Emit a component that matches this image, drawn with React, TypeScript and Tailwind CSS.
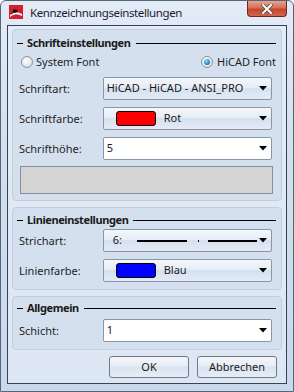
import React from "react";

const font = { fontFamily: '"Noto Sans", "Open Sans", sans-serif' };

function Arrow() {
  return (
    <svg width="8" height="5" viewBox="0 0 8 5" className="shrink-0">
      <path d="M0 0 H8 L4 4.5 Z" fill="#000" />
    </svg>
  );
}

function GroupTitle({ text }: { text: string }) {
  return (
    <div className="flex items-center h-[16px] pl-[4px] pr-[5px]">
      <div className="w-[6px] h-[1px] bg-black" />
      <span className="ml-[4px] mr-[5px] font-bold text-[11px] tracking-[-0.4px] leading-[16px] text-[#1a1a1a]">{text}</span>
      <div className="flex-1 h-[1px] bg-black" />
    </div>
  );
}

function Row({ label, children, className = "" }: { label: string; children: React.ReactNode; className?: string }) {
  return (
    <div className={"flex items-center h-[23px] pl-[6px] pr-[9px] " + className}>
      <div className="w-[84px] text-[11px] text-[#1e1e1e] leading-[14px]">{label}</div>
      {children}
    </div>
  );
}

function Combo({ children, editable = false }: { children: React.ReactNode; editable?: boolean }) {
  return (
    <div
      className={
        "w-[170px] h-[23px] rounded-[2px] border flex items-center pr-[4px] " +
        (editable
          ? "bg-white border-[#8896a8]"
          : "border-[#8896a8] bg-[linear-gradient(to_bottom,#f4f7fb_0%,#e6edf6_45%,#d6e1ef_50%,#e3eaf5_100%)]")
      }
    >
      <div className="flex-1 flex items-center min-w-0">{children}</div>
      <Arrow />
    </div>
  );
}

function Swatch({ color, label }: { color: string; label: string }) {
  return (
    <div className="flex items-center pl-[12px]">
      <div className="w-[40px] h-[15px] rounded-[3px] border border-black" style={{ background: color }} />
      <span className="ml-[8px] text-[11px] text-[#1a1a1a]">{label}</span>
    </div>
  );
}

function Radio({ checked }: { checked: boolean }) {
  return (
    <div className="w-[12px] h-[12px] rounded-full border border-[#8a939e] bg-[radial-gradient(circle_at_40%_35%,#ffffff,#dfe3e8_70%,#c9ced5)] flex items-center justify-center">
      {checked && (
        <div className="w-[6px] h-[6px] rounded-full bg-[radial-gradient(circle_at_40%_35%,#9fdcff,#1e86c8_60%,#0b4f86)]" />
      )}
    </div>
  );
}

function Group({ children, className = "" }: { children: React.ReactNode; className?: string }) {
  return (
    <div className={"rounded-[4px] border border-[#c2cedd] bg-[#d5e0ee] flex flex-col " + className}>{children}</div>
  );
}

export default function App() {
  return (
    <div
      style={font}
      className="w-[294px] h-[392px] border border-[#55657a] rounded-t-[6px] bg-[linear-gradient(to_bottom,#e3ebf6_0%,#d3dfee_40%,#cad8ea_100%)] flex flex-col"
    >
      {/* title bar */}
      <div className="h-[24px] flex items-start">
        <svg width="14" height="14" viewBox="0 0 14 14" className="ml-[8px] mt-[4px] shrink-0">
          <rect x="0" y="0" width="14" height="14" fill="#d4202c" />
          <path d="M1 10 Q6 5 13 9 L13 11 Q6 7 1 12 Z" fill="#ffffff" />
          <ellipse cx="6" cy="6" rx="2.4" ry="1.8" fill="#111" />
          <path d="M2 9 Q5 6 9 6" stroke="#111" strokeWidth="1" fill="none" />
        </svg>
        <span className="ml-[7px] mt-[4px] text-[11.5px] tracking-[-0.4px] leading-[16px] text-[#1d1a33]">Kennzeichnungseinstellungen</span>
        <div className="flex-1" />
        <div className="mr-[6px] w-[40px] h-[16px] rounded-b-[4px] border border-t-0 border-[#6b2a20] bg-[linear-gradient(to_bottom,#e8a393_0%,#d4705a_45%,#c3462d_55%,#d1664b_100%)] flex items-center justify-center">
          <svg width="12" height="10" viewBox="0 0 12 10">
            <path d="M2 1 L10 9 M10 1 L2 9" stroke="#4a4a4a" strokeWidth="3.4" strokeLinecap="square" />
            <path d="M2 1 L10 9 M10 1 L2 9" stroke="#ffffff" strokeWidth="2" strokeLinecap="square" />
          </svg>
        </div>
      </div>

      {/* client area */}
      <div className="mx-[6px] h-[359px] border border-[#33445a] bg-[linear-gradient(to_bottom,#e3ebf6,#dde6f3)] px-[4px] pt-[3px] flex flex-col">
        <Group className="h-[172px] pt-[5px]">
          <GroupTitle text="Schrifteinstellungen" />
          <div className="mt-[3px] h-[16px] flex items-center pl-[8px]">
            <div className="w-[180px] flex items-center">
              <Radio checked={false} />
              <span className="ml-[3px] text-[11px] text-[#1e1e1e]">System Font</span>
            </div>
            <Radio checked={true} />
            <span className="ml-[4px] text-[11px] text-[#1e1e1e]">HiCAD Font</span>
          </div>
          <Row label="Schriftart:" className="mt-[7px]">
            <Combo>
              <span className="pl-[3px] text-[11px] text-[#1a1a1a] whitespace-nowrap">HiCAD - HiCAD - ANSI_PRO</span>
            </Combo>
          </Row>
          <Row label="Schriftfarbe:" className="mt-[7px]">
            <Combo>
              <Swatch color="#ff0000" label="Rot" />
            </Combo>
          </Row>
          <Row label="Schrifthöhe:" className="mt-[7px]">
            <Combo editable>
              <span className="pl-[3px] text-[11px] text-[#1a1a1a]">5</span>
            </Combo>
          </Row>
          <div className="mt-[6px] ml-[7px] mr-[8px] h-[28px] border border-[#8a8f96] bg-[#d4d4d4]" />
        </Group>

        <Group className="mt-[6px] h-[83px] pt-[4px]">
          <GroupTitle text="Linieneinstellungen" />
          <Row label="Strichart:" className="mt-[1px]">
            <Combo>
              <span className="pl-[9px] text-[11px] text-[#1a1a1a]">6:</span>
              <div className="ml-[15px] w-[50px] h-[2px] bg-black" />
              <div className="ml-[11px] w-[1px] h-[2px] bg-black" />
              <div className="ml-[9px] w-[49px] h-[2px] bg-black" />
            </Combo>
          </Row>
          <Row label="Linienfarbe:" className="mt-[7px]">
            <Combo>
              <Swatch color="#0000ff" label="Blau" />
            </Combo>
          </Row>
        </Group>

        <Group className="mt-[6px] h-[54px] pt-[3px]">
          <GroupTitle text="Allgemein" />
          <Row label="Schicht:" className="mt-[3px]">
            <Combo editable>
              <span className="pl-[3px] text-[11px] text-[#1a1a1a]">1</span>
            </Combo>
          </Row>
        </Group>

        <div className="mt-[6px] flex justify-end gap-[8px] pr-[5px]">
          {["OK", "Abbrechen"].map((t) => (
            <div
              key={t}
              className="w-[80px] h-[22px] rounded-[3px] border border-[#707a86] bg-[linear-gradient(to_bottom,#f3f6fa_0%,#e8eef6_45%,#d9e3f0_50%,#e6edf6_100%)] flex items-center justify-center text-[11px] text-[#1a1a1a]"
            >
              {t}
            </div>
          ))}
        </div>
      </div>
    </div>
  );
}
